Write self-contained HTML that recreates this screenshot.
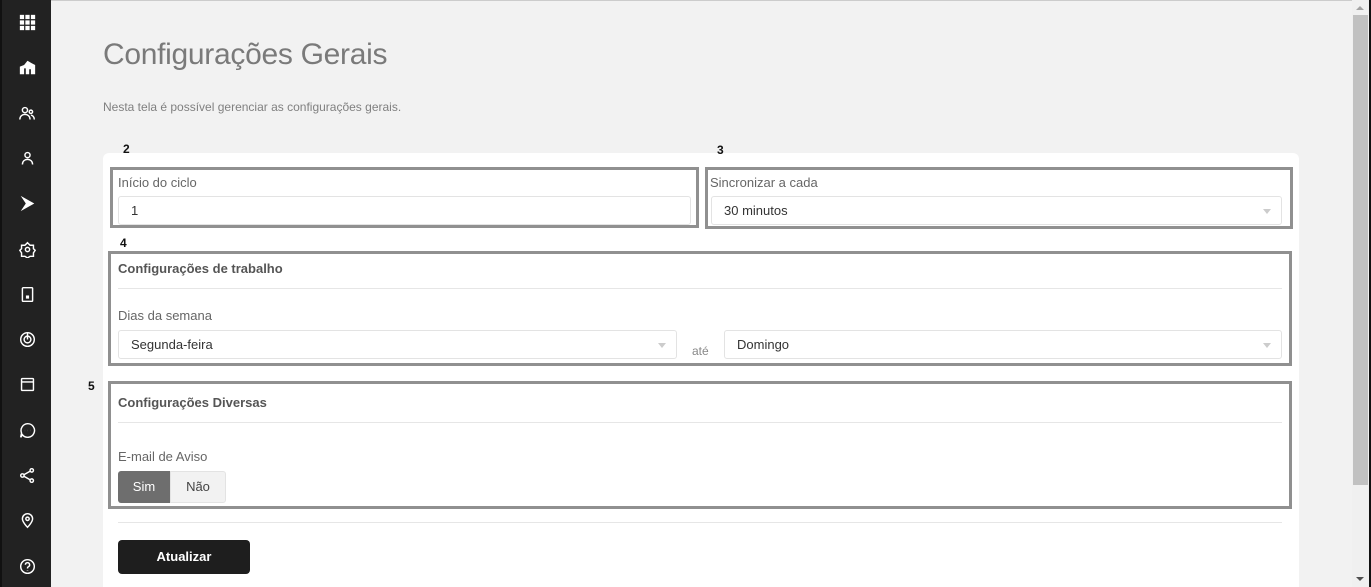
<!DOCTYPE html>
<html><head><meta charset="utf-8"><style>
*{box-sizing:border-box;margin:0;padding:0}
body{width:1371px;height:587px;overflow:hidden;background:#f2f2f2;font-family:"Liberation Sans",sans-serif;position:relative}
.a{position:absolute}
#sb{left:0;top:0;width:51px;height:587px;background:#222;border-left:2px solid #111}
.ic{position:absolute;left:17px;width:17px;height:17px}
.ic svg{width:17px;height:17px;fill:none;stroke:#fff;stroke-width:1.7}
.card{left:103px;top:153px;width:1196px;height:434px;background:#fff;border-radius:6px 6px 0 0}
.box{border:3px solid #909090}
.lbl{font-size:13px;color:#666}
.inp{border:1px solid #e3e3e3;border-radius:3px;background:#fff;font-size:13px;color:#333;padding:0 12px;line-height:28px}
.car{position:absolute;right:10px;top:12px;border-left:4px solid transparent;border-right:4px solid transparent;border-top:5px solid #ccc}
.hr{height:1px;background:#e6e6e6;left:118px;width:1164px}
.num{font-size:12px;font-weight:bold;color:#111}
.h{font-size:13px;font-weight:bold;color:#555}
</style></head><body>
<div class="a" style="left:0;top:0;width:1371px;height:1px;background:#ccc"></div>
<div id="sb" class="a">
<div class="ic" style="top:14px"><svg viewBox="0 0 20 20" style="fill:#fff;stroke:none"><rect x="1" y="1" width="5" height="5"/><rect x="7.5" y="1" width="5" height="5"/><rect x="14" y="1" width="5" height="5"/><rect x="1" y="7.5" width="5" height="5"/><rect x="7.5" y="7.5" width="5" height="5"/><rect x="14" y="7.5" width="5" height="5"/><rect x="1" y="14" width="5" height="5"/><rect x="7.5" y="14" width="5" height="5"/><rect x="14" y="14" width="5" height="5"/></svg></div>
<div class="ic" style="top:59px"><svg viewBox="0 0 20 20" style="fill:#fff;stroke:none"><path d="M1 18V9l5-2 4-5 5 3 4 2v11h-5v-6h-2v6H8v-7H6v7z"/></svg></div>
<div class="ic" style="top:105px"><svg viewBox="0 0 20 20"><circle cx="7" cy="6" r="3"/><path d="M1 17c0-4 3-6 6-6s6 2 6 6"/><circle cx="14" cy="8" r="2"/><path d="M14 12c2 0 4 2 4 5"/></svg></div>
<div class="ic" style="top:150px"><svg viewBox="0 0 20 20"><circle cx="10" cy="6" r="3"/><path d="M4 17c0-4 3-6 6-6s6 2 6 6"/></svg></div>
<div class="ic" style="top:195px"><svg viewBox="0 0 20 20" style="fill:#fff;stroke:none"><path d="M2 1l16 9-16 9 6-9z"/></svg></div>
<div class="ic" style="top:241px"><svg viewBox="0 0 20 20"><path d="M10 2l3 3h4v4l2 2-2 3v4h-4l-3 2-3-2H3v-4l-2-3 2-2V5h4z"/><circle cx="10" cy="10" r="2.5"/></svg></div>
<div class="ic" style="top:286px"><svg viewBox="0 0 20 20"><rect x="4" y="2" width="12" height="16" rx="1"/><rect x="9" y="12" width="2" height="2" fill="#fff"/></svg></div>
<div class="ic" style="top:331px"><svg viewBox="0 0 20 20"><circle cx="10" cy="10" r="8"/><circle cx="10" cy="10" r="4"/><path d="M10 2v8"/></svg></div>
<div class="ic" style="top:376px"><svg viewBox="0 0 20 20"><rect x="3" y="3" width="14" height="14" rx="1"/><path d="M3 7h14"/></svg></div>
<div class="ic" style="top:422px"><svg viewBox="0 0 20 20"><path d="M10 2a8 8 0 1 1-6 13l-2 3 1-5A8 8 0 0 1 10 2z"/><path d="M7 10h.1M10 10h.1M13 10h.1" stroke-width="2"/></svg></div>
<div class="ic" style="top:467px"><svg viewBox="0 0 20 20"><circle cx="4" cy="10" r="2"/><circle cx="15" cy="4" r="2"/><circle cx="15" cy="16" r="2"/><path d="M6 9l7-4M6 11l7 4"/></svg></div>
<div class="ic" style="top:512px"><svg viewBox="0 0 20 20"><path d="M10 18s-6-6-6-10a6 6 0 0 1 12 0c0 4-6 10-6 10z"/><circle cx="10" cy="8" r="2"/></svg></div>
<div class="ic" style="top:558px"><svg viewBox="0 0 20 20"><circle cx="10" cy="10" r="8"/><path d="M7.5 8a2.5 2.5 0 1 1 3.5 2.3c-1 .4-1 1-1 2"/><path d="M10 14.5v.5" stroke-width="2"/></svg></div>
</div>

<div class="a" style="left:103px;top:38px;font-size:30px;color:#7a7a7a;letter-spacing:-0.3px">Configurações Gerais</div>
<div class="a" style="left:103px;top:100px;font-size:12px;color:#808080">Nesta tela é possível gerenciar as configurações gerais.</div>

<div class="a card"></div>
<div class="a num" style="left:123px;top:142px">2</div>
<div class="a num" style="left:717px;top:143px">3</div>
<div class="a num" style="left:120px;top:236px">4</div>
<div class="a num" style="left:88px;top:379px">5</div>

<div class="a box" style="left:110px;top:167px;width:589px;height:61px"></div>
<div class="a lbl" style="left:118px;top:175px">Início do ciclo</div>
<div class="a inp" style="left:118px;top:196px;width:573px;height:29px">1</div>

<div class="a box" style="left:705px;top:167px;width:588px;height:62px"></div>
<div class="a lbl" style="left:710px;top:175px">Sincronizar a cada</div>
<div class="a inp" style="left:711px;top:196px;width:571px;height:29px">30 minutos<span class="car"></span></div>

<div class="a box" style="left:108px;top:251px;width:1184px;height:115px"></div>
<div class="a h" style="left:118px;top:261px">Configurações de trabalho</div>
<div class="a hr" style="top:288px"></div>
<div class="a lbl" style="left:118px;top:308px">Dias da semana</div>
<div class="a inp" style="left:118px;top:330px;width:559px;height:29px">Segunda-feira<span class="car"></span></div>
<div class="a lbl" style="left:692px;top:344px;font-size:12px;color:#888">até</div>
<div class="a inp" style="left:724px;top:330px;width:558px;height:29px">Domingo<span class="car"></span></div>

<div class="a box" style="left:108px;top:381px;width:1184px;height:128px"></div>
<div class="a h" style="left:118px;top:395px">Configurações Diversas</div>
<div class="a hr" style="top:422px"></div>
<div class="a lbl" style="left:118px;top:449px">E-mail de Aviso</div>
<div class="a" style="left:118px;top:471px;width:52px;height:32px;background:#6e6e6e;color:#fff;font-size:13px;text-align:center;line-height:32px;border-radius:3px 0 0 3px">Sim</div>
<div class="a" style="left:170px;top:471px;width:56px;height:32px;background:#f2f2f2;border:1px solid #e3e3e3;color:#444;font-size:13px;text-align:center;line-height:30px;border-radius:0 3px 3px 0">Não</div>
<div class="a hr" style="top:522px"></div>
<div class="a" style="left:118px;top:540px;width:132px;height:34px;background:#1e1e1e;color:#fff;font-size:13px;font-weight:bold;text-align:center;line-height:34px;border-radius:4px">Atualizar</div>

<div class="a" style="left:1352px;top:0;width:17px;height:587px;background:#f0f0f0"></div>
<div class="a" style="left:1353px;top:15px;width:15px;height:470px;background:#c1c1c1"></div>
<div class="a" style="left:1356px;top:6px;border-left:4px solid transparent;border-right:4px solid transparent;border-bottom:4px solid #a3a3a3"></div>
<div class="a" style="left:1356px;top:577px;border-left:4px solid transparent;border-right:4px solid transparent;border-top:4px solid #505050"></div>
<div class="a" style="left:1369px;top:0;width:2px;height:587px;background:#111"></div>
</body></html>
